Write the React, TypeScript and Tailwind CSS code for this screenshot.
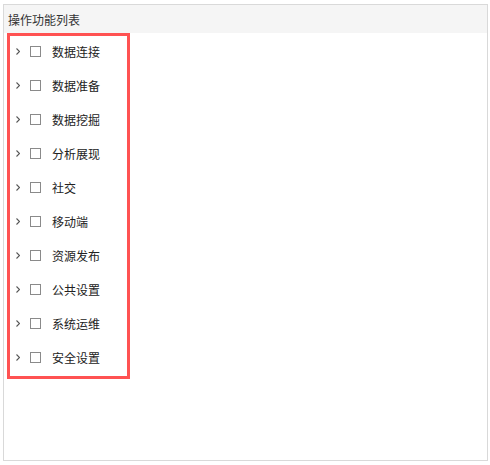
import React from "react";

const items = ["数据连接", "数据准备", "数据挖掘", "分析展现", "社交", "移动端", "资源发布", "公共设置", "系统运维", "安全设置"];

export default function App() {
  return (
    <div
      className="w-[490px] h-[465px] bg-white pt-[4px] pl-[3px]"
      style={{ fontFamily: '"Noto Sans CJK SC", "Noto Sans", sans-serif' }}
    >
      <div className="w-[485px] h-[457px] border border-[#d9d9d9] flex flex-col">
        <div className="h-[28px] bg-[#f5f5f5] flex items-center pl-[4px] pt-[1px] text-[12px] text-[#333] leading-none">
          操作功能列表
        </div>
        <div className="ml-[3px] w-[123px] border-[3px] border-[#ff5252] flex flex-col gap-[3px] pb-[3px]">
          {items.map((t) => (
            <div key={t} className="h-[31px] flex items-center">
              <svg width="4" height="7" viewBox="0 0 4 7" className="ml-[6px]">
                <path d="M0.5 0.5 L3.5 3.5 L0.5 6.5" fill="none" stroke="#555" strokeWidth="1.1" />
              </svg>
              <div className="ml-[10px] w-[11px] h-[11px] border border-[#8a8a8a] bg-white" />
              <span className="ml-[11px] text-[12px] text-[#222] leading-none">{t}</span>
            </div>
          ))}
        </div>
      </div>
    </div>
  );
}
